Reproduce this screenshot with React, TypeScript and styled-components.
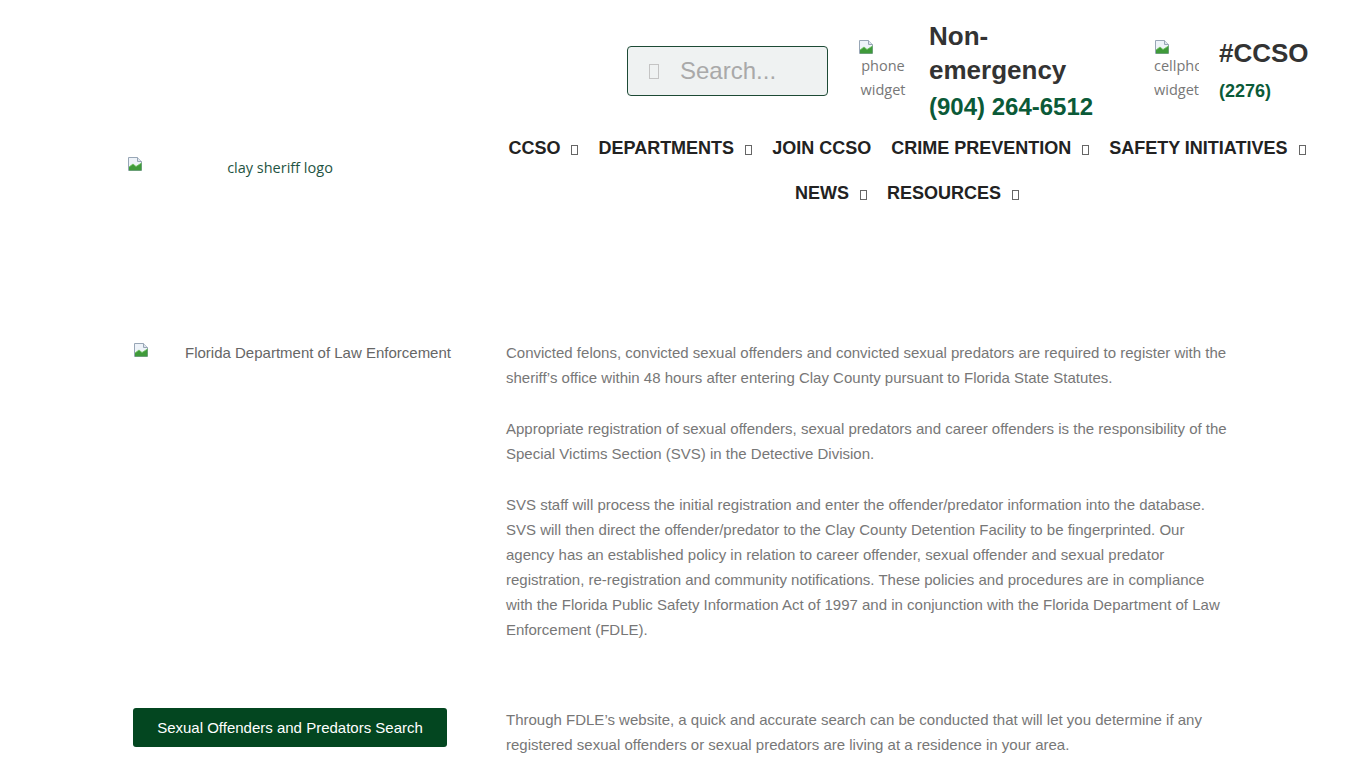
import styled, { createGlobalStyle } from 'styled-components';

const GlobalStyle = createGlobalStyle`
  html, body {
    margin: 0;
    padding: 0;
    background: #ffffff;
  }
  body {
    font-family: "Liberation Sans", Arial, sans-serif;
    color: #777777;
  }
  * {
    box-sizing: border-box;
  }
`;

const Page = styled.div`
  width: 1366px;
  min-height: 768px;
`;

const Header = styled.header`
  display: flex;
  align-items: flex-start;
  padding: 19px 0 0 127px;
  height: 215px;
`;

const LogoCol = styled.div`
  width: 290px;
  padding-top: 136px;
`;

const AltBox = styled.div<{ $width: number; $color: string; $stack?: boolean }>`
  display: flex;
  flex-direction: ${({ $stack }) => ($stack ? 'column' : 'row')};
  width: ${({ $width }) => $width}px;
  overflow: hidden;
  color: ${({ $color }) => $color};
  font-family: "Open Sans", "Noto Sans", sans-serif;
  font-size: 14.5px;
  line-height: 24px;
`;

const AltText = styled.span`
  flex: 1;
  text-align: center;
  white-space: nowrap;
  line-height: 25px;
`;

const AltLine = styled.span<{ $left?: boolean }>`
  display: block;
  white-space: nowrap;
  text-align: ${({ $left }) => ($left ? 'left' : 'center')};
`;

const IconWrap = styled.span`
  display: block;
  width: 16px;
  height: 16px;
  flex: none;
`;

function BrokenIcon() {
  return (
    <IconWrap>
      <svg width="16" height="16" viewBox="0 0 16 16">
        <path d="M1.5 1.5h9l4 4v9h-13z" fill="#eef3f9" stroke="#98a6b6" />
        <path d="M10.5 1.5v4h4" fill="#dde4ec" stroke="#98a6b6" />
        <path d="M2 14.5V11l4-3 3 2.5 5.5-3.5v7.5z" fill="#3f9a3a" />
        <path d="M2 11l4-3 3 2.5 5.5-3.5" fill="none" stroke="#6cc25a" strokeWidth="0.8" />
      </svg>
    </IconWrap>
  );
}

const HeaderRight = styled.div`
  margin-left: 75px;
  width: 830px;
  display: flex;
  flex-direction: column;
`;

const WidgetRow = styled.div`
  display: flex;
  justify-content: flex-end;
  align-items: flex-start;
  padding-right: 14px;
`;

const SearchBox = styled.label`
  display: flex;
  align-items: center;
  width: 201px;
  height: 50px;
  margin-top: 27px;
  margin-right: 30px;
  padding-left: 21px;
  border: 1px solid #1d4a35;
  border-radius: 4px;
  background: #eff2f2;
`;

const SearchTofu = styled.span`
  display: inline-block;
  width: 10px;
  height: 15px;
  border: 1px solid #c4c4c4;
  margin-right: 21px;
`;

const SearchInput = styled.input`
  width: 130px;
  border: none;
  background: transparent;
  outline: none;
  padding: 0;
  font-family: "Liberation Sans", Arial, sans-serif;
  font-size: 24px;
  color: #555;
  &::placeholder {
    color: #a9a9a9;
  }
`;

const Widget = styled.div<{ $gap: number; $after: number }>`
  display: flex;
  align-items: flex-start;
  gap: ${({ $gap }) => $gap}px;
  margin-right: ${({ $after }) => $after}px;
`;

const WidgetImg = styled.div`
  margin-top: 19px;
`;

const WidgetText = styled.div<{ $width: number; $top: number }>`
  width: ${({ $width }) => $width}px;
  margin-top: ${({ $top }) => $top}px;
`;

const WidgetTitle = styled.div`
  font-size: 26px;
  line-height: 34px;
  font-weight: 700;
  color: #333333;
`;

const WidgetPhone = styled.div<{ $small?: boolean }>`
  font-size: ${({ $small }) => ($small ? '18px' : '24px')};
  line-height: ${({ $small }) => ($small ? '22px' : '40px')};
  margin-top: ${({ $small }) => ($small ? '10px' : '0')};
  font-weight: 700;
  color: #0b5a38;
  white-space: nowrap;
`;

const Nav = styled.nav`
  display: flex;
  flex-wrap: wrap;
  justify-content: center;
  column-gap: 20px;
  margin-top: -1px;
`;

const NavItem = styled.a`
  display: flex;
  align-items: center;
  height: 45px;
  font-size: 18px;
  font-weight: 700;
  color: #222222;
  text-transform: uppercase;
  text-decoration: none;
  white-space: nowrap;
`;

const Tofu = styled.span`
  display: inline-block;
  width: 7px;
  height: 10px;
  border: 1px solid #666;
  margin-left: 11px;
  margin-top: 2px;
`;

const Main = styled.main`
  padding: 125px 0 0 133px;
`;

const Section = styled.section`
  display: grid;
  grid-template-columns: 354px 724px;
  column-gap: 19px;
  align-items: start;
  margin-bottom: 65px;
`;

const SideImage = styled.div`
  display: flex;
  align-items: flex-start;
  padding-top: 1.5px;
  color: #666666;
  font-size: 15px;
  line-height: 22px;
`;

const SideAlt = styled.span`
  flex: 1;
  text-align: center;
  white-space: nowrap;
`;

const Body = styled.div`
  font-size: 15px;
  line-height: 25px;
  color: #777777;
  p {
    margin: 0 0 26px;
  }
  p:last-child {
    margin-bottom: 0;
  }
`;

const ActionButton = styled.a`
  display: flex;
  align-items: center;
  justify-content: center;
  width: 314px;
  height: 39px;
  margin-top: 0.5px;
  border-radius: 3px;
  background: #034620;
  color: #ffffff;
  font-size: 15px;
  text-decoration: none;
`;

const navItems = [
  { label: 'CCSO', menu: true },
  { label: 'Departments', menu: true },
  { label: 'Join CCSO', menu: false },
  { label: 'Crime Prevention', menu: true },
  { label: 'Safety Initiatives', menu: true },
  { label: 'News', menu: true },
  { label: 'Resources', menu: true },
];

export default function App() {
  return (
    <Page>
      <GlobalStyle />
      <Header>
        <LogoCol>
          <AltBox $width={290} $color="#1f5443">
            <BrokenIcon />
            <AltText>clay sheriff logo</AltText>
          </AltBox>
        </LogoCol>
        <HeaderRight>
          <WidgetRow>
            <SearchBox>
              <SearchTofu />
              <SearchInput placeholder="Search..." />
            </SearchBox>
            <Widget $gap={21} $after={55}>
              <WidgetImg>
                <AltBox $width={50} $color="#777777" $stack>
                  <BrokenIcon />
                  <AltLine>phone</AltLine>
                  <AltLine>widget</AltLine>
                </AltBox>
              </WidgetImg>
              <WidgetText $width={170} $top={0}>
                <WidgetTitle>Non-emergency</WidgetTitle>
                <WidgetPhone>(904) 264-6512</WidgetPhone>
              </WidgetText>
            </Widget>
            <Widget $gap={20} $after={0}>
              <WidgetImg>
                <AltBox $width={45} $color="#777777" $stack>
                  <BrokenIcon />
                  <AltLine $left>cellphone</AltLine>
                  <AltLine $left>widget</AltLine>
                </AltBox>
              </WidgetImg>
              <WidgetText $width={89} $top={17}>
                <WidgetTitle>#CCSO</WidgetTitle>
                <WidgetPhone $small>(2276)</WidgetPhone>
              </WidgetText>
            </Widget>
          </WidgetRow>
          <Nav>
            {navItems.map((item) => (
              <NavItem key={item.label} href="#">
                {item.label}
                {item.menu && <Tofu />}
              </NavItem>
            ))}
          </Nav>
        </HeaderRight>
      </Header>

      <Main>
        <Section>
          <SideImage>
            <BrokenIcon />
            <SideAlt>Florida Department of Law Enforcement</SideAlt>
          </SideImage>
          <Body>
            <p>
              Convicted felons, convicted sexual offenders and convicted sexual predators are required to register
              with the sheriff’s office within 48 hours after entering Clay County pursuant to Florida State Statutes.
            </p>
            <p>
              Appropriate registration of sexual offenders, sexual predators and career offenders is the responsibility
              of the Special Victims Section (SVS) in the Detective Division.
            </p>
            <p>
              SVS staff will process the initial registration and enter the offender/predator information into the
              database. SVS will then direct the offender/predator to the Clay County Detention Facility to be
              fingerprinted. Our agency has an established policy in relation to career offender, sexual offender and
              sexual predator registration, re-registration and community notifications. These policies and procedures
              are in compliance with the Florida Public Safety Information Act of 1997 and in conjunction with the
              Florida Department of Law Enforcement (FDLE).
            </p>
          </Body>
        </Section>
        <Section>
          <ActionButton href="#">Sexual Offenders and Predators Search</ActionButton>
          <Body>
            <p>
              Through FDLE’s website, a quick and accurate search can be conducted that will let you determine if any
              registered sexual offenders or sexual predators are living at a residence in your area.
            </p>
          </Body>
        </Section>
      </Main>
    </Page>
  );
}
